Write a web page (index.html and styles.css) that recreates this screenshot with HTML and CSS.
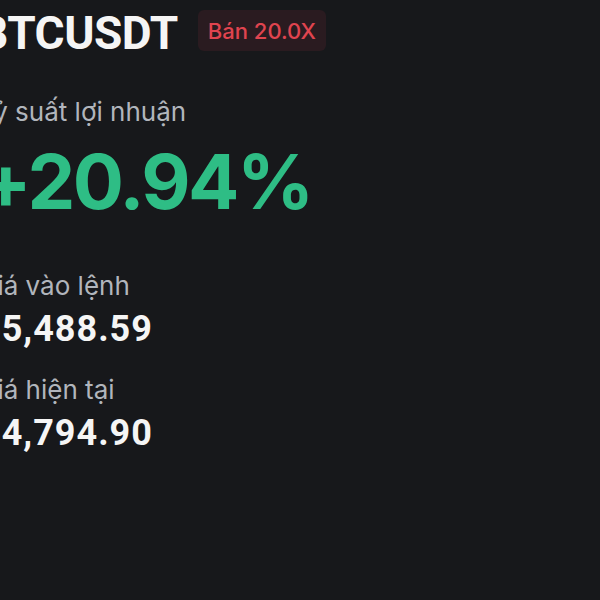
FILE: index.html
```html
<!DOCTYPE html>
<html lang="vi">
<head>
    <meta charset="UTF-8">
    <meta name="viewport" content="width=device-width, initial-scale=1.0">
    <title>BTCUSDT - Vị thế</title>
    <link rel="stylesheet" href="styles.css">
</head>
<body>
    <div class="position-card">
        <div class="position-head">
            <span class="symbol">BTCUSDT</span>
            <span class="side-badge">Bán 20.0X</span>
        </div>

        <div class="roi-label">Tỷ suất lợi nhuận</div>
        <div class="roi-value">+20.94%</div>

        <div class="stat">
            <div class="stat-label">Giá vào lệnh</div>
            <div class="stat-value">65,488.59</div>
        </div>

        <div class="stat stat-next">
            <div class="stat-label">Giá hiện tại</div>
            <div class="stat-value">64,794.90</div>
        </div>
    </div>
</body>
</html>
```

FILE: styles.css
```css
html, body {
    margin: 0;
    padding: 0;
    height: 100%;
}

body {
    font-family: Inter, "Noto Sans", "Liberation Sans", sans-serif;
    background-color: #17181b;
    color: #eaecef;
    overflow: hidden;
}

.position-card {
    margin-left: -22px;
    padding-top: 10px;
}

.position-head {
    display: flex;
    align-items: flex-start;
    gap: 20px;
}

.symbol {
    font-family: Roboto, "Liberation Sans", sans-serif;
    font-size: 46px;
    line-height: 41px;
    padding-top: 3px;
    margin-left: 1px;
    font-weight: 700;
    letter-spacing: -0.5px;
    color: #f5f5f5;
}

.side-badge {
    display: inline-block;
    height: 41px;
    box-sizing: border-box;
    padding: 2px 10px 0;
    line-height: 39px;
    font-size: 22px;
    font-weight: 500;
    color: #e0444f;
    background-color: #2a1b20;
    border-radius: 6px;
}

.roi-label,
.stat-label {
    font-size: 26px;
    line-height: 32px;
    color: #b1b5bc;
}

.roi-label {
    margin-top: 42px;
}

.roi-value {
    margin-top: 13px;
    margin-left: 2px;
    font-size: 76px;
    line-height: 80px;
    font-weight: 700;
    letter-spacing: -2.5px;
    color: #2ebd85;
}

.stat {
    margin-top: 49px;
}

.stat-next {
    margin-top: 23px;
}

.stat-value {
    margin-top: 5px;
    margin-left: 2px;
    font-family: Roboto, "Liberation Sans", sans-serif;
    font-size: 36px;
    line-height: 44px;
    font-weight: 700;
    letter-spacing: 1px;
    color: #f5f5f5;
}
```
